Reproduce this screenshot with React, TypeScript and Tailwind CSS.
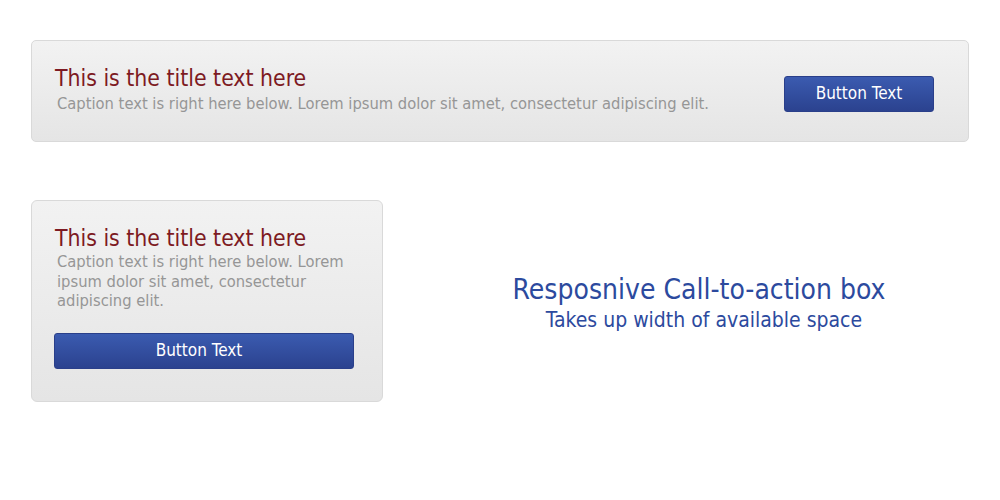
const font = { fontFamily: '"DejaVu Sans Condensed", "DejaVu Sans", sans-serif' };

function CtaButton({ className }: { className: string }) {
  return (
    <button
      className={`h-[36px] rounded-[3px] border border-[#2a3f8a] bg-gradient-to-b from-[#3b5bb0] to-[#2b428f] text-[17px] text-white ${className}`}
    >
      Button Text
    </button>
  );
}

export default function App() {
  return (
    <div className="w-[1000px] h-[500px] bg-white" style={font}>
      <div className="pt-[40px] px-[31px]">
        <div className="flex items-center justify-between h-[102px] pl-[23px] pr-[34px] rounded-[5px] border border-[#d9d9d9] bg-gradient-to-b from-[#f2f2f2] to-[#e5e5e5]">
          <div className="-mt-[3px]">
            <div className="text-[22.8px] leading-[25px] text-[#7d1a22]">This is the title text here</div>
            <div className="mt-[3px] pl-[2px] text-[16.4px] leading-[20px] text-[#969696]">
              Caption text is right here below. Lorem ipsum dolor sit amet, consectetur adipiscing elit.
            </div>
          </div>
          <CtaButton className="w-[150px] mt-[5px]" />
        </div>
      </div>

      <div className="flex items-center mt-[58px] px-[31px]">
        <div className="w-[352px] h-[202px] pt-[24px] pl-[23px] pr-[22px] rounded-[6px] border border-[#d9d9d9] bg-gradient-to-b from-[#f2f2f2] to-[#e5e5e5]">
          <div className="text-[22.8px] leading-[26px] text-[#7d1a22]">This is the title text here</div>
          <div className="mt-[1px] pl-[2px] text-[16.4px] leading-[19.5px] text-[#969696]">
            Caption text is right here below. Lorem ipsum dolor sit amet, consectetur adipiscing elit.
          </div>
          <CtaButton className="w-[300px] mt-[22px] -ml-[1px] pr-[10px]" />
        </div>
        <div className="flex-1 pt-[5px] text-center text-[#2c4a9e]">
          <div className="text-[28px] leading-[32px] pl-[46px]">Resposnive Call-to-action box</div>
          <div className="text-[21px] leading-[28px] pl-[56px]">Takes up width of available space</div>
        </div>
      </div>
    </div>
  );
}
